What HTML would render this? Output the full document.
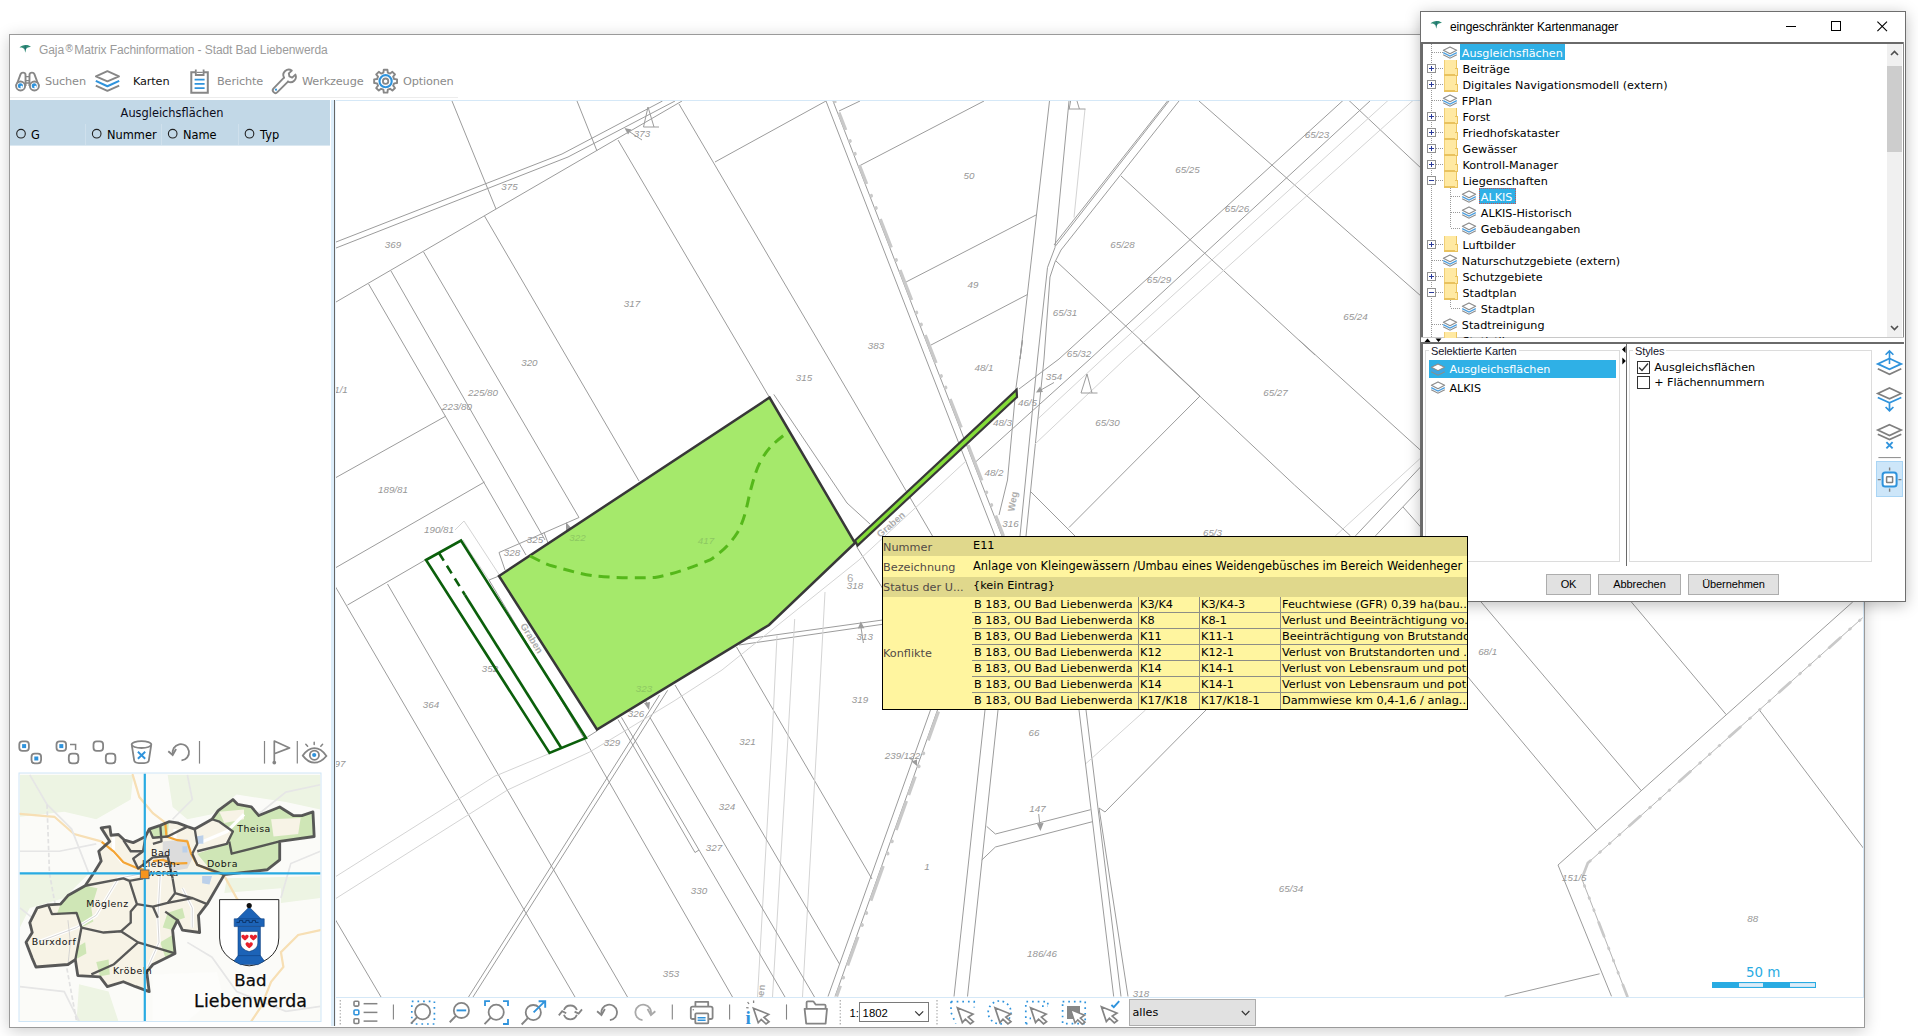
<!DOCTYPE html>
<html lang="de"><head><meta charset="utf-8"><title>Gaja Matrix Fachinformation - Stadt Bad Liebenwerda</title>
<style>
html,body{margin:0;padding:0;background:#fff;}
body{width:1918px;height:1036px;position:relative;overflow:hidden;font-family:"DejaVu Sans","Liberation Sans",sans-serif;font-size:11px;color:#000;}
.abs{position:absolute;}
.seg{font-family:"Liberation Sans",sans-serif;}
#win{left:9px;top:34px;width:1854px;height:992px;border:1px solid #9a9a9a;background:#fff;box-shadow:0 3px 15px rgba(0,0,0,.2);}
#dlg{left:1420px;top:11px;width:484px;height:589px;border:1px solid #6e6e6e;background:#fff;box-shadow:0 3px 14px rgba(0,0,0,.26);}
.t{position:absolute;white-space:nowrap;line-height:16px;height:16px;}
.tb{font-size:11.3px;letter-spacing:-.15px;color:#8a8a8a;}
svg{position:absolute;left:0;top:0;overflow:visible;}
.row{position:absolute;left:0;height:16px;line-height:16px;white-space:nowrap;font-size:11.2px;}
.btn{position:absolute;height:19px;line-height:19px;border:1px solid #adadad;background:#e1e1e1;text-align:center;font-family:'Liberation Sans',sans-serif;font-size:11px;letter-spacing:-.1px;}
.tt{position:absolute;white-space:nowrap;font-size:11.3px;line-height:16px;height:16px;}
</style></head><body>
<div id="win" class="abs"></div>
<!-- main title -->
<div class="t seg" style="left:39px;top:42px;font-size:12px;color:#9b9b9b;letter-spacing:-.09px">Gaja<span style="font-size:10px;position:relative;top:-2px;margin:0 1.5px;color:#8a8a8a">®</span>Matrix Fachinformation - Stadt Bad Liebenwerda</div>
<!-- toolbar labels -->
<div class="t tb" style="left:45px;top:74px">Suchen</div>
<div class="t tb" style="left:133px;top:74px;color:#111">Karten</div>
<div class="t tb" style="left:217px;top:74px">Berichte</div>
<div class="t tb" style="left:302px;top:74px">Werkzeuge</div>
<div class="t tb" style="left:403px;top:74px">Optionen</div>
<div class="abs" style="left:10px;top:97px;width:448px;height:1px;background:#ececec"></div>
<!-- left panel header -->
<div class="abs" style="left:10px;top:100px;width:320px;height:45px;background:#c2d8e7"></div>
<div class="abs" style="left:10px;top:145px;width:320px;height:1px;background:#dbe8f1"></div>
<div class="t" style="left:12px;width:320px;top:105px;text-align:center;font-size:11.4px;color:#0c0c1c">Ausgleichsflächen</div>
<div class="abs" style="left:85px;top:124px;width:1px;height:21px;background:#cfe0ec"></div>
<div class="abs" style="left:161px;top:124px;width:1px;height:21px;background:#cfe0ec"></div>
<div class="abs" style="left:238px;top:124px;width:1px;height:21px;background:#cfe0ec"></div>
<div class="t" style="left:31px;top:127px;font-size:11.4px">G</div>
<div class="t" style="left:107px;top:127px;font-size:11.4px">Nummer</div>
<div class="t" style="left:183px;top:127px;font-size:11.4px">Name</div>
<div class="t" style="left:260px;top:127px;font-size:11.4px">Typ</div>
<!-- splitter -->
<div class="abs" style="left:331px;top:100px;width:3px;height:926px;background:#dcedfa"></div>
<div class="abs" style="left:334px;top:100px;width:1px;height:926px;background:#666"></div>
<div class="abs" style="left:335px;top:100px;width:1px;height:926px;background:#eaf5fd"></div>
<!-- map frame -->
<div class="abs" style="left:336px;top:100px;width:1528px;height:1px;background:#d5e8f7"></div>
<div class="abs" style="left:336px;top:997px;width:1528px;height:1px;background:#d5e8f7"></div>
<div class="abs" style="left:1863px;top:100px;width:1px;height:898px;background:#d5e8f7"></div>
<svg width="1918" height="1036" viewBox="0 0 1918 1036">
<g transform="translate(19.5,44.5)"><path d="M0,3.2 C2,0.2 9,-0.6 11.5,2.6 C9.5,2.2 8,3 6.6,4.4 L5.8,8.2 L4.9,4.6 C3.6,3.2 1.8,2.6 0,3.2 Z" fill="#2e8b74"/><path d="M5.8,1 L5.8,5" stroke="#1f5f7a" stroke-width=".8"/></g>
<g transform="translate(1430.5,20.5)"><path d="M0,3.2 C2,0.2 9,-0.6 11.5,2.6 C9.5,2.2 8,3 6.6,4.4 L5.8,8.2 L4.9,4.6 C3.6,3.2 1.8,2.6 0,3.2 Z" fill="#2e8b74"/><path d="M5.8,1 L5.8,5" stroke="#1f5f7a" stroke-width=".8"/></g>
<g fill="none" stroke="#878787" stroke-width="1.9" stroke-linejoin="round">
<path d="M16.2,86 L20.6,74.2 Q21.2,72.6 23,72.6 Q25.3,72.6 25.5,74.6 L25.6,86"/>
<path d="M38.8,86 L34.4,74.2 Q33.8,72.6 32,72.6 Q29.7,72.6 29.5,74.6 L29.4,86"/>
<circle cx="20.6" cy="86" r="4.5" fill="#fff"/><circle cx="34.4" cy="86" r="4.5" fill="#fff"/>
<path d="M25.6,76.6 H29.4 M25.6,80.6 H29.4 M25.6,83 H29.4" stroke-width="1.4"/>
</g>
<circle cx="20.4" cy="85.8" r="2.5" fill="#2f93dc"/><circle cx="34.2" cy="85.8" r="2.5" fill="#2f93dc"/><circle cx="21.5" cy="86.9" r="1.1" fill="#fff"/><circle cx="35.3" cy="86.9" r="1.1" fill="#fff"/>
<g fill="none" stroke-width="1.9" stroke-linejoin="round"><path d="M95.8,85.6 L107.4,90.9 L119.2,85.6" stroke="#878787"/><path d="M95.8,80.9 L107.4,86.2 L119.2,80.9" stroke="#2f93dc" stroke-width="2.1"/><path d="M107.4,71.2 L119,76.3 L107.4,81.4 L95.9,76.3 Z" stroke="#878787"/></g>
<g fill="none" stroke="#878787" stroke-width="2"><path d="M195.5,72.2 H191.3 V92.7 H207.8 V72.2 H203.8"/><path d="M195.8,69.4 V75 H203.6 V69.4" stroke-width="1.8"/><path d="M196.6,72.4 H202.8" stroke-width="1.2"/></g>
<path d="M194.6,79.6 H204.6 M194.6,83.9 H204.6 M194.6,88.1 H204.6" stroke="#2f93dc" stroke-width="1.9" fill="none"/>
<g fill="none" stroke="#878787" stroke-width="1.9" stroke-linejoin="round" stroke-linecap="round"><path d="M284,77.6 L273.6,88.4 A2.6,2.6 0 0 0 277.4,92.2 L288,81.6"/><path d="M288,81.6 A5.4,5.4 0 0 0 295.4,74.6 L292.2,77.6 L289.4,76.4 L288.8,73.4 L291.8,70.6 A5.4,5.4 0 0 0 284,77.6"/></g>
<circle cx="276" cy="89.7" r="1.1" fill="#2f93dc"/>
<path d="M383.42,72.67 L383.75,69.75 L387.45,69.75 L387.78,72.67 L390.09,73.63 L392.39,71.80 L395.00,74.41 L393.17,76.71 L394.13,79.02 L397.05,79.35 L397.05,83.05 L394.13,83.38 L393.17,85.69 L395.00,87.99 L392.39,90.60 L390.09,88.77 L387.78,89.73 L387.45,92.65 L383.75,92.65 L383.42,89.73 L381.11,88.77 L378.81,90.60 L376.20,87.99 L378.03,85.69 L377.07,83.38 L374.15,83.05 L374.15,79.35 L377.07,79.02 L378.03,76.71 L376.20,74.41 L378.81,71.80 L381.11,73.63 Z" fill="none" stroke="#878787" stroke-width="1.9" stroke-linejoin="round"/>
<circle cx="385.6" cy="81.2" r="6.1" fill="none" stroke="#2f93dc" stroke-width="2.1"/>
<circle cx="385.6" cy="81.2" r="2.7" fill="none" stroke="#878787" stroke-width="1.8"/>
<circle cx="21" cy="133.7" r="4.3" fill="none" stroke="#222" stroke-width="1.1"/>
<circle cx="96.7" cy="133.7" r="4.3" fill="none" stroke="#222" stroke-width="1.1"/>
<circle cx="172.7" cy="133.7" r="4.3" fill="none" stroke="#222" stroke-width="1.1"/>
<circle cx="249.5" cy="133.7" r="4.3" fill="none" stroke="#222" stroke-width="1.1"/>
</svg>
<svg width="1918" height="1036" viewBox="0 0 1918 1036">
<defs><clipPath id="mc"><rect x="336" y="101" width="1527" height="896"/></clipPath></defs>
<g clip-path="url(#mc)">
<g fill="none" stroke-width="1">
<polyline points="336,242 562,154 662.5,101" stroke="#9c9c9c"/>
<polyline points="336,248 568,157 675,101" stroke="#9c9c9c"/>
<polyline points="336,302 682,101" stroke="#9c9c9c"/>
<polyline points="452,101 496,209" stroke="#9c9c9c"/>
<polyline points="577,101 597,151" stroke="#9c9c9c"/>
<polyline points="679,104 853,400 932.5,536" stroke="#9c9c9c"/>
<polyline points="618,140 769.5,397.5" stroke="#9c9c9c"/>
<polyline points="484.5,216 639,481" stroke="#9c9c9c"/>
<polyline points="423.6,252 579,517.5" stroke="#9c9c9c"/>
<polyline points="391,271 545,540" stroke="#9c9c9c"/>
<polyline points="368.6,284 526,555" stroke="#9c9c9c"/>
<polyline points="715,162 826,101" stroke="#9c9c9c"/>
<polyline points="839,111 860,101" stroke="#9c9c9c"/>
<polyline points="861,165 984,101" stroke="#9c9c9c"/>
<polyline points="906,282 1036,215" stroke="#9c9c9c"/>
<polyline points="931,345 1027.5,294.5" stroke="#9c9c9c"/>
<polyline points="826,101 926,359 995,536" stroke="#9c9c9c"/>
<polyline points="833,101 933,359 1002,536" stroke="#9c9c9c"/>
<polyline points="336,477.5 446,416" stroke="#9c9c9c"/>
<polyline points="336,567.5 484.5,482" stroke="#9c9c9c"/>
<polyline points="347.5,605 426,559.5" stroke="#9c9c9c"/>
<polyline points="335,586 575,997" stroke="#9c9c9c"/>
<polyline points="387.5,584 627.5,997" stroke="#9c9c9c"/>
<polyline points="335,919 381,997" stroke="#9c9c9c"/>
<polyline points="505,570 499,552.5 579,517.5" stroke="#9c9c9c"/>
<polyline points="544,532.5 548,543" stroke="#9c9c9c"/>
<polyline points="489,580 499,576" stroke="#9c9c9c"/>
<polyline points="455,530 464,521 470,530 500,576" stroke="#d4d4d4"/>
<polyline points="463,540 470,552 489,580" stroke="#d4d4d4"/>
<polyline points="773.8,394.4 847,503 870,524" stroke="#9c9c9c"/>
<polyline points="856.6,546.7 883,589" stroke="#9c9c9c"/>
<polyline points="739,645 882.5,624.3" stroke="#9c9c9c"/>
<polyline points="746,639 882.5,620" stroke="#9c9c9c"/>
<polyline points="736.5,647 872,879" stroke="#9c9c9c"/>
<polyline points="335,877 495,776 498.8,774.6 549.5,753.5" stroke="#d4d4d4"/>
<polyline points="777,635.6 772,740 757.5,997" stroke="#d4d4d4"/>
<polyline points="794.7,619 787.8,740 772.5,997" stroke="#d4d4d4"/>
<polyline points="825,592 817,740 802.5,997" stroke="#d4d4d4"/>
<polyline points="675,685 708,740 839.5,964" stroke="#9c9c9c"/>
<polyline points="650,717.5 814.5,997" stroke="#9c9c9c"/>
<polyline points="489,580 585,740 732.5,997" stroke="#9c9c9c"/>
<polyline points="587.4,737 597.3,730.8" stroke="#9c9c9c"/>
<polyline points="659.5,695 468.5,997" stroke="#9c9c9c"/>
<polyline points="667.6,690.3 473,997" stroke="#9c9c9c"/>
<polyline points="618,719.5 695,852.5 699,850" stroke="#9c9c9c"/>
<polyline points="621.5,717.4 699,850 785,997" stroke="#9c9c9c"/>
<polyline points="335,899 507.5,790 553,768.8 589.5,752.1 626,730.2 674,701 722,670 859,560 966.5,460.5" stroke="#d4d4d4"/>
<polyline points="1038.4,418.4 1102.5,359" stroke="#d4d4d4"/>
<polyline points="1049.5,101 1020,359 1022.5,340 1016,387.5 1007.5,480 999,515" stroke="#9c9c9c"/>
<polyline points="1069,101 1055,247.5 1047.5,267.5 1037.5,359 1020,536" stroke="#9c9c9c"/>
<polyline points="1061,250 1055,262 1050,277 1044,359 1026,536" stroke="#9c9c9c"/>
<polyline points="1167.5,101 1054,245" stroke="#9c9c9c"/>
<polyline points="1169,101 1055.5,246" stroke="#9c9c9c"/>
<polyline points="1179,101 1061,250" stroke="#9c9c9c"/>
<polyline points="1085,109 1074,217.5" stroke="#d4d4d4"/>
<polyline points="1121,176 1315,355" stroke="#9c9c9c"/>
<polyline points="1199,101 1420.7,295.8" stroke="#9c9c9c"/>
<polyline points="1349,100.5 1420.7,167.8" stroke="#9c9c9c"/>
<polyline points="1056,261 1161,359 1200,396" stroke="#9c9c9c"/>
<polyline points="1059,359 1343,100.5" stroke="#9c9c9c"/>
<polyline points="1090,359 1370.5,100.5" stroke="#9c9c9c"/>
<polyline points="1102.5,359 1388,100.5" stroke="#d4d4d4"/>
<polyline points="1125,359 1413,100.5" stroke="#d4d4d4"/>
<polyline points="1019,389 1059,359" stroke="#9c9c9c"/>
<polyline points="975,462.5 1090,359" stroke="#9c9c9c"/>
<polyline points="1035,444 1125,359" stroke="#d4d4d4"/>
<polyline points="1140,340 1294.5,485 1350.4,535.8" stroke="#9c9c9c"/>
<polyline points="1299,340 1420.7,450.4" stroke="#9c9c9c"/>
<polyline points="1069,527.5 1200,396" stroke="#9c9c9c"/>
<polyline points="1030,491 1075,536" stroke="#9c9c9c"/>
<polyline points="1355.5,535.8 1420.7,466.8" stroke="#9c9c9c"/>
<polyline points="1375.5,535.8 1420.7,488" stroke="#9c9c9c"/>
<polyline points="1335.4,535.8 1420.7,458" stroke="#d4d4d4"/>
<polyline points="1403,507 1420.7,527" stroke="#9c9c9c"/>
<polyline points="930.5,710 828,996.5" stroke="#9c9c9c"/>
<polyline points="937.5,710 835,996.5" stroke="#9c9c9c"/>
<polyline points="985,710 954,996.5" stroke="#9c9c9c"/>
<polyline points="998,710 967.5,996.5" stroke="#9c9c9c"/>
<polyline points="1079,710 1113.7,996.5" stroke="#9c9c9c"/>
<polyline points="1086,710 1121,996.5" stroke="#9c9c9c"/>
<polyline points="1099,808 1128,996.5" stroke="#9c9c9c"/>
<polyline points="1206,710 1105,812 1099,808" stroke="#9c9c9c"/>
<polyline points="1145.5,710 1086,763.5" stroke="#d4d4d4"/>
<polyline points="986.7,826.4 995.4,834 1090.6,809.7" stroke="#9c9c9c"/>
<polyline points="981.8,860 995.4,847 1092,821.8" stroke="#9c9c9c"/>
<polyline points="1852.8,601.9 1558,865 1611.5,996.3" stroke="#9c9c9c"/>
<polyline points="1862.7,617.7 1587.8,863 1581.8,878.8 1627.3,996.3" stroke="#b4b4b4"/>
<polyline points="1481,601.9 1641.2,790.6" stroke="#9c9c9c"/>
<polyline points="1467.9,677 1596.5,830.5" stroke="#9c9c9c"/>
<polyline points="1631.3,601.9 1726.2,714.6" stroke="#9c9c9c"/>
<polyline points="1759.9,710.7 1864,849" stroke="#9c9c9c"/>
<polyline points="1504.7,996.3 1599.6,973.8" stroke="#9c9c9c"/>
</g>
<g fill="none" stroke="#c9c9c9" stroke-width="3.3" stroke-linecap="butt">
<polyline points="834.5,101 835.275,103"/>
<polyline points="838.957,112.5 845.74,130"/>
<polyline points="859.306,165 866.671,184"/>
<polyline points="880.236,219 891.283,247.5"/>
<polyline points="900.004,270 911.632,300"/>
<polyline points="925.198,335 934.5,359 936.059,363"/>
<polyline points="950.093,399 961.203,427.5"/>
<polyline points="968.025,445 981.864,480.5"/>
<polyline points="995.586,515.7 1003.5,536"/>
<path d="M850.004,141 l0.01,0.02" stroke-width="3.6" stroke-linecap="round"/>
<path d="M854.946,153.75 l0.01,0.02" stroke-width="3.6" stroke-linecap="round"/>
<path d="M871.225,195.75 l0.01,0.02" stroke-width="3.6" stroke-linecap="round"/>
<path d="M875.973,208 l0.01,0.02" stroke-width="3.6" stroke-linecap="round"/>
<path d="M896.128,260 l0.01,0.02" stroke-width="3.6" stroke-linecap="round"/>
<path d="M916.477,312.5 l0.01,0.02" stroke-width="3.6" stroke-linecap="round"/>
<path d="M921.128,324.5 l0.01,0.02" stroke-width="3.6" stroke-linecap="round"/>
<path d="M941.127,376 l0.01,0.02" stroke-width="3.6" stroke-linecap="round"/>
<path d="M945.61,387.5 l0.01,0.02" stroke-width="3.6" stroke-linecap="round"/>
<path d="M986.464,492.3 l0.01,0.02" stroke-width="3.6" stroke-linecap="round"/>
<path d="M991.415,505 l0.01,0.02" stroke-width="3.6" stroke-linecap="round"/>
<polyline points="938.463,711.5 928.124,740.4"/>
<polyline points="915.209,776.5 908.59,795"/>
<polyline points="906.443,801 896.068,830"/>
<polyline points="883.188,866 870.81,900.6"/>
<polyline points="857.93,936.6 847.591,965.5"/>
<polyline points="840.364,985.7 836.5,996.5"/>
<path d="M923.473,753.4 l0.01,0.02" stroke-width="3.6" stroke-linecap="round"/>
<path d="M918.822,766.4 l0.01,0.02" stroke-width="3.6" stroke-linecap="round"/>
<path d="M891.99,841.4 l0.01,0.02" stroke-width="3.6" stroke-linecap="round"/>
<path d="M887.661,853.5 l0.01,0.02" stroke-width="3.6" stroke-linecap="round"/>
<path d="M866.373,913 l0.01,0.02" stroke-width="3.6" stroke-linecap="round"/>
<path d="M862.08,925 l0.01,0.02" stroke-width="3.6" stroke-linecap="round"/>
<path d="M843.262,977.6 l0.01,0.02" stroke-width="3.6" stroke-linecap="round"/>
</g>
<g fill="none" stroke="#c9c9c9" stroke-linecap="round">
<polyline points="1862.7,617.7 1587.8,863 1581.8,878.8 1627.3,996.3" stroke-width="2.7" stroke-dasharray="15 12.5 1 12 1 12 1 12.5" stroke-dashoffset="-30"/>
</g>
<g fill="none" stroke="#9c9c9c" stroke-width="1"><path d="M648,107 L643.5,127 L659,127 M648,107 L654,127"/><path d="M1087,374 L1081,393 L1097.5,393 M1087,374 L1092,393"/><path d="M1068,109 H1085.5 M1069.2,109 L1070.6,101 M1077,101 L1079.4,109"/><path d="M627,130 L642,140"/><path d="M1054,382.5 L1040,390.5"/><path d="M1038.7,814 L1040,826"/><path d="M909,757.5 L915,763"/><path d="M861.1,628 L863.4,643"/><path d="M644,697 L648,706"/></g>
<g fill="#9c9c9c"><path d="M624.5,128 L631.5,129.5 L628,134.5 Z"/><path d="M1036,392.5 L1040,386.5 L1043,392 Z"/><path d="M566,522 L572,529 L566,531 Z"/><path d="M1036.8,823.5 L1043.6,823 L1040.4,831 Z"/><path d="M911.5,761.5 L917,759.5 L917,766 Z"/><path d="M857.8,628.6 L860.8,621.6 L864.4,628.2 Z"/><path d="M644,703 L650,702 L649,710 Z"/></g>
<g font-family="Liberation Sans, sans-serif" font-style="italic" font-size="9.8" fill="#979797" text-anchor="middle">
<text x="642" y="137.4">373</text>
<text x="509.5" y="190.4">375</text>
<text x="393" y="248.4">369</text>
<text x="632" y="307.4">317</text>
<text x="529.4" y="366.4">320</text>
<text x="876" y="349.4">383</text>
<text x="804" y="381.4">315</text>
<text x="483" y="395.9">225/80</text>
<text x="341" y="393.4">1/1</text>
<text x="457" y="410.4">223/80</text>
<text x="393" y="492.9">189/81</text>
<text x="439" y="533.4">190/81</text>
<text x="535" y="543.4">325</text>
<text x="512" y="556.4">328</text>
<text x="577.5" y="540.4">322</text>
<text x="706" y="543.4">417</text>
<text x="490" y="672.4">352</text>
<text x="431" y="707.9">364</text>
<text x="644" y="691.4">323</text>
<text x="636" y="717.4">326</text>
<text x="612" y="746.4">329</text>
<text x="747.5" y="745.4">321</text>
<text x="340" y="767.4">97</text>
<text x="727" y="810.4">324</text>
<text x="714" y="851.4">327</text>
<text x="699" y="894.4">330</text>
<text x="671" y="977.4">353</text>
<text x="969" y="179.4">50</text>
<text x="973" y="287.9">49</text>
<text x="1187.5" y="173.4">65/25</text>
<text x="1237" y="212.4">65/26</text>
<text x="1122.5" y="248.4">65/28</text>
<text x="1159" y="283.4">65/29</text>
<text x="1065" y="316.4">65/31</text>
<text x="1079" y="357.4">65/32</text>
<text x="984" y="371.4">48/1</text>
<text x="1054" y="380.4">354</text>
<text x="1027.5" y="406.4">46/5</text>
<text x="1002.5" y="425.9">48/3</text>
<text x="1107.5" y="426.4">65/30</text>
<text x="1275.5" y="396.4">65/27</text>
<text x="994" y="476.4">48/2</text>
<text x="1010.5" y="527.4">316</text>
<text x="1212.5" y="535.9">65/3</text>
<text x="855" y="588.9">318</text>
<text x="864.8" y="640.4">313</text>
<text x="860" y="703.4">319</text>
<text x="1034" y="735.9">66</text>
<text x="902.5" y="758.9">239/122</text>
<text x="1037.5" y="811.9">147</text>
<text x="927" y="870.4">1</text>
<text x="1042" y="957.4">186/46</text>
<text x="1141" y="997.4">318</text>
<text x="1291" y="892.4">65/34</text>
<text x="1317" y="137.8">65/23</text>
<text x="1355.5" y="319.8">65/24</text>
<text x="1487.7" y="654.7">68/1</text>
<text x="1574.3" y="881.4">151/5</text>
<text x="1752.7" y="921.8">88</text>
<text x="850.3" y="582" font-style="normal" font-size="11.5" fill="#aaa">6</text>
</g>
<g font-family="Liberation Sans, sans-serif" font-weight="bold" font-size="9.6" fill="#adadad" text-anchor="middle">
<text transform="translate(529,640) rotate(58)">Graben</text>
<text transform="translate(893,527) rotate(-41)">Graben</text>
<text transform="translate(1016,502) rotate(-80)">Weg</text>
<text transform="translate(765,985) rotate(-84)" text-anchor="end">Graben</text>
</g>
<g fill="none" stroke="#0b5f0b" stroke-width="2.6" stroke-linejoin="miter"><polygon points="426,560 461,540.5 586,738 549.5,753"/><path d="M465,595 L561,747.5"/><path d="M439,553 L465,595" stroke-dasharray="9 6"/></g>
<polygon points="769.5,397.5 855,543 769,625 597,729.5 499,576" fill="#a5e96b" stroke="#383838" stroke-width="2.5" stroke-linejoin="miter"/>
<path d="M530,556 C540,561 545,564 552.5,566 C565,569.5 580,574 595,576 C615,578 640,578 655,577.5 C675,574 695,566 710,560 C722,552 731,543 737.5,532.5 C745,519 747,505 750,492.5 C753,481 756,470 760,462.5 C764,455 768,449 772.5,445 C777,440.5 782,436.5 787.5,432.5" fill="none" stroke="#55b81a" stroke-width="3" stroke-dasharray="11 7"/>
<polygon points="855,540.5 1016.6,389.6 1017,397 857.5,545.6" fill="#84dc38" stroke="#383838" stroke-width="2.2" stroke-linejoin="miter"/>
<g font-family="Liberation Sans, sans-serif" font-style="italic" font-size="9.8" fill="#8dc862" text-anchor="middle"><text x="577.5" y="541">322</text><text x="706" y="544">417</text><text x="644" y="692">323</text></g>
<g><rect x="1712" y="982" width="104" height="6" fill="#29abe2"/><rect x="1739" y="983.1" width="24" height="3.8" fill="#dcecf8"/><rect x="1790" y="983.1" width="25" height="3.8" fill="#dcecf8"/><text x="1763.2" y="977" font-family="DejaVu Sans, sans-serif" font-size="13.4" fill="#29abe2" text-anchor="middle">50 m</text></g>
</g></svg>
<div id="dlg" class="abs">
<div class="t seg" style="left:29px;top:7px;font-size:12px;letter-spacing:-.11px">eingeschränkter Kartenmanager</div>
<svg width="486" height="40" viewBox="0 0 486 40"><g stroke="#000" stroke-width="1" fill="none"><path d="M365,14.5 H375"/><rect x="410.5" y="9.5" width="9" height="9"/><path d="M456.4,9.6 L466,19.2 M466,9.6 L456.4,19.2" stroke-width="1.1"/></g></svg>
<div class="abs" style="left:0;top:30px;width:483px;height:2px;background:#6a6a6a"></div>
<div class="abs" style="left:0;top:30px;width:2px;height:296px;background:#6a6a6a"></div>
<div class="abs" style="left:482px;top:30px;width:1px;height:296px;background:#8a8a8a"></div>
<div class="abs" style="left:0;top:325px;width:483px;height:1px;background:#c8c8c8"></div>
<div class="abs" style="left:2px;top:32px;width:465px;height:294px;overflow:hidden">
<div class="abs" style="left:8px;top:0;width:1px;height:300px;background-image:linear-gradient(to bottom,#9a9a9a 50%,transparent 50%);background-size:1px 2px;"></div>
<div class="abs" style="left:27px;top:144px;width:1px;height:40px;background-image:linear-gradient(to bottom,#9a9a9a 50%,transparent 50%);background-size:1px 2px;"></div>
<div class="abs" style="left:27px;top:248px;width:1px;height:16px;background-image:linear-gradient(to bottom,#9a9a9a 50%,transparent 50%);background-size:1px 2px;"></div>
<div class="abs" style="left:9px;top:8px;width:11px;height:1px;background-image:linear-gradient(to right,#9a9a9a 50%,transparent 50%);background-size:2px 1px;"></div>
<svg width="16" height="14" viewBox="0 0 16 14" style="left:19px;top:1.8px"><path d="M1.2,8.8 L8,12.2 L14.8,8.8" fill="none" stroke="#8c8c8c" stroke-width="1.15"/><path d="M1.2,6.6 L8,10 L14.8,6.6" fill="none" stroke="#4a9fe0" stroke-width="1.25"/><path d="M8,0.9 L14.6,4.3 L8,7.7 L1.4,4.3 Z" fill="#fff" stroke="#8c8c8c" stroke-width="1.15" stroke-linejoin="round"/></svg>
<div class="abs" style="left:36.8px;top:0px;width:105px;height:16px;background:#2fb0e6;"></div>
<div class="row" style="left:38.8px;top:2px;color:#fff;">Ausgleichsflächen</div>
<div class="abs" style="left:9px;top:24px;width:11px;height:1px;background-image:linear-gradient(to right,#9a9a9a 50%,transparent 50%);background-size:2px 1px;"></div>
<div class="abs" style="left:21px;top:16px;width:11px;height:16px;background:#ffe9a2;border-left:1px solid #f0cf78;border-right:1px solid #ebc560"></div>
<div class="abs" style="left:21px;top:30px;width:13px;height:1.5px;background:#e9c25e"></div>
<div class="abs" style="left:32px;top:24px;width:2px;height:6px;border:1px solid #e9c25e;border-left:none;background:#ffe9a2"></div>
<div class="abs" style="left:4px;top:20px;width:7px;height:7px;border:1px solid #919191;background:#fff"></div>
<div class="abs" style="left:6px;top:24px;width:5px;height:1px;background:#2a3a9a"></div>
<div class="abs" style="left:8px;top:22px;width:1px;height:5px;background:#2a3a9a"></div>
<div class="row" style="left:39.5px;top:18px;">Beiträge</div>
<div class="abs" style="left:9px;top:40px;width:11px;height:1px;background-image:linear-gradient(to right,#9a9a9a 50%,transparent 50%);background-size:2px 1px;"></div>
<div class="abs" style="left:21px;top:32px;width:11px;height:16px;background:#ffe9a2;border-left:1px solid #f0cf78;border-right:1px solid #ebc560"></div>
<div class="abs" style="left:21px;top:46px;width:13px;height:1.5px;background:#e9c25e"></div>
<div class="abs" style="left:32px;top:40px;width:2px;height:6px;border:1px solid #e9c25e;border-left:none;background:#ffe9a2"></div>
<div class="abs" style="left:4px;top:36px;width:7px;height:7px;border:1px solid #919191;background:#fff"></div>
<div class="abs" style="left:6px;top:40px;width:5px;height:1px;background:#2a3a9a"></div>
<div class="abs" style="left:8px;top:38px;width:1px;height:5px;background:#2a3a9a"></div>
<div class="row" style="left:39.5px;top:34px;">Digitales Navigationsmodell (extern)</div>
<div class="abs" style="left:9px;top:56px;width:11px;height:1px;background-image:linear-gradient(to right,#9a9a9a 50%,transparent 50%);background-size:2px 1px;"></div>
<svg width="16" height="14" viewBox="0 0 16 14" style="left:19px;top:49.8px"><path d="M1.2,8.8 L8,12.2 L14.8,8.8" fill="none" stroke="#8c8c8c" stroke-width="1.15"/><path d="M1.2,6.6 L8,10 L14.8,6.6" fill="none" stroke="#4a9fe0" stroke-width="1.25"/><path d="M8,0.9 L14.6,4.3 L8,7.7 L1.4,4.3 Z" fill="#fff" stroke="#8c8c8c" stroke-width="1.15" stroke-linejoin="round"/></svg>
<div class="row" style="left:38.8px;top:50px;">FPlan</div>
<div class="abs" style="left:9px;top:72px;width:11px;height:1px;background-image:linear-gradient(to right,#9a9a9a 50%,transparent 50%);background-size:2px 1px;"></div>
<div class="abs" style="left:21px;top:64px;width:11px;height:16px;background:#ffe9a2;border-left:1px solid #f0cf78;border-right:1px solid #ebc560"></div>
<div class="abs" style="left:21px;top:78px;width:13px;height:1.5px;background:#e9c25e"></div>
<div class="abs" style="left:32px;top:72px;width:2px;height:6px;border:1px solid #e9c25e;border-left:none;background:#ffe9a2"></div>
<div class="abs" style="left:4px;top:68px;width:7px;height:7px;border:1px solid #919191;background:#fff"></div>
<div class="abs" style="left:6px;top:72px;width:5px;height:1px;background:#2a3a9a"></div>
<div class="abs" style="left:8px;top:70px;width:1px;height:5px;background:#2a3a9a"></div>
<div class="row" style="left:39.5px;top:66px;">Forst</div>
<div class="abs" style="left:9px;top:88px;width:11px;height:1px;background-image:linear-gradient(to right,#9a9a9a 50%,transparent 50%);background-size:2px 1px;"></div>
<div class="abs" style="left:21px;top:80px;width:11px;height:16px;background:#ffe9a2;border-left:1px solid #f0cf78;border-right:1px solid #ebc560"></div>
<div class="abs" style="left:21px;top:94px;width:13px;height:1.5px;background:#e9c25e"></div>
<div class="abs" style="left:32px;top:88px;width:2px;height:6px;border:1px solid #e9c25e;border-left:none;background:#ffe9a2"></div>
<div class="abs" style="left:4px;top:84px;width:7px;height:7px;border:1px solid #919191;background:#fff"></div>
<div class="abs" style="left:6px;top:88px;width:5px;height:1px;background:#2a3a9a"></div>
<div class="abs" style="left:8px;top:86px;width:1px;height:5px;background:#2a3a9a"></div>
<div class="row" style="left:39.5px;top:82px;">Friedhofskataster</div>
<div class="abs" style="left:9px;top:104px;width:11px;height:1px;background-image:linear-gradient(to right,#9a9a9a 50%,transparent 50%);background-size:2px 1px;"></div>
<div class="abs" style="left:21px;top:96px;width:11px;height:16px;background:#ffe9a2;border-left:1px solid #f0cf78;border-right:1px solid #ebc560"></div>
<div class="abs" style="left:21px;top:110px;width:13px;height:1.5px;background:#e9c25e"></div>
<div class="abs" style="left:32px;top:104px;width:2px;height:6px;border:1px solid #e9c25e;border-left:none;background:#ffe9a2"></div>
<div class="abs" style="left:4px;top:100px;width:7px;height:7px;border:1px solid #919191;background:#fff"></div>
<div class="abs" style="left:6px;top:104px;width:5px;height:1px;background:#2a3a9a"></div>
<div class="abs" style="left:8px;top:102px;width:1px;height:5px;background:#2a3a9a"></div>
<div class="row" style="left:39.5px;top:98px;">Gewässer</div>
<div class="abs" style="left:9px;top:120px;width:11px;height:1px;background-image:linear-gradient(to right,#9a9a9a 50%,transparent 50%);background-size:2px 1px;"></div>
<div class="abs" style="left:21px;top:112px;width:11px;height:16px;background:#ffe9a2;border-left:1px solid #f0cf78;border-right:1px solid #ebc560"></div>
<div class="abs" style="left:21px;top:126px;width:13px;height:1.5px;background:#e9c25e"></div>
<div class="abs" style="left:32px;top:120px;width:2px;height:6px;border:1px solid #e9c25e;border-left:none;background:#ffe9a2"></div>
<div class="abs" style="left:4px;top:116px;width:7px;height:7px;border:1px solid #919191;background:#fff"></div>
<div class="abs" style="left:6px;top:120px;width:5px;height:1px;background:#2a3a9a"></div>
<div class="abs" style="left:8px;top:118px;width:1px;height:5px;background:#2a3a9a"></div>
<div class="row" style="left:39.5px;top:114px;">Kontroll-Manager</div>
<div class="abs" style="left:9px;top:136px;width:11px;height:1px;background-image:linear-gradient(to right,#9a9a9a 50%,transparent 50%);background-size:2px 1px;"></div>
<div class="abs" style="left:21px;top:128px;width:11px;height:16px;background:#ffe9a2;border-left:1px solid #f0cf78;border-right:1px solid #ebc560"></div>
<div class="abs" style="left:21px;top:142px;width:13px;height:1.5px;background:#e9c25e"></div>
<div class="abs" style="left:32px;top:136px;width:2px;height:6px;border:1px solid #e9c25e;border-left:none;background:#ffe9a2"></div>
<div class="abs" style="left:4px;top:132px;width:7px;height:7px;border:1px solid #919191;background:#fff"></div>
<div class="abs" style="left:6px;top:136px;width:5px;height:1px;background:#2a3a9a"></div>
<div class="row" style="left:39.5px;top:130px;">Liegenschaften</div>
<div class="abs" style="left:28px;top:152px;width:10px;height:1px;background-image:linear-gradient(to right,#9a9a9a 50%,transparent 50%);background-size:2px 1px;"></div>
<svg width="16" height="14" viewBox="0 0 16 14" style="left:37.5px;top:145.8px"><path d="M1.2,8.8 L8,12.2 L14.8,8.8" fill="none" stroke="#8c8c8c" stroke-width="1.15"/><path d="M1.2,6.6 L8,10 L14.8,6.6" fill="none" stroke="#4a9fe0" stroke-width="1.25"/><path d="M8,0.9 L14.6,4.3 L8,7.7 L1.4,4.3 Z" fill="#fff" stroke="#8c8c8c" stroke-width="1.15" stroke-linejoin="round"/></svg>
<div class="abs" style="left:55.8px;top:144px;width:37px;height:16px;background:#2fb0e6;outline:1px dotted #c55;outline-offset:-1px;"></div>
<div class="row" style="left:57.8px;top:146px;color:#fff;">ALKIS</div>
<div class="abs" style="left:28px;top:168px;width:10px;height:1px;background-image:linear-gradient(to right,#9a9a9a 50%,transparent 50%);background-size:2px 1px;"></div>
<svg width="16" height="14" viewBox="0 0 16 14" style="left:37.5px;top:161.8px"><path d="M1.2,8.8 L8,12.2 L14.8,8.8" fill="none" stroke="#8c8c8c" stroke-width="1.15"/><path d="M1.2,6.6 L8,10 L14.8,6.6" fill="none" stroke="#4a9fe0" stroke-width="1.25"/><path d="M8,0.9 L14.6,4.3 L8,7.7 L1.4,4.3 Z" fill="#fff" stroke="#8c8c8c" stroke-width="1.15" stroke-linejoin="round"/></svg>
<div class="row" style="left:57.8px;top:162px;">ALKIS-Historisch</div>
<div class="abs" style="left:28px;top:184px;width:10px;height:1px;background-image:linear-gradient(to right,#9a9a9a 50%,transparent 50%);background-size:2px 1px;"></div>
<svg width="16" height="14" viewBox="0 0 16 14" style="left:37.5px;top:177.8px"><path d="M1.2,8.8 L8,12.2 L14.8,8.8" fill="none" stroke="#8c8c8c" stroke-width="1.15"/><path d="M1.2,6.6 L8,10 L14.8,6.6" fill="none" stroke="#4a9fe0" stroke-width="1.25"/><path d="M8,0.9 L14.6,4.3 L8,7.7 L1.4,4.3 Z" fill="#fff" stroke="#8c8c8c" stroke-width="1.15" stroke-linejoin="round"/></svg>
<div class="row" style="left:57.8px;top:178px;">Gebäudeangaben</div>
<div class="abs" style="left:9px;top:200px;width:11px;height:1px;background-image:linear-gradient(to right,#9a9a9a 50%,transparent 50%);background-size:2px 1px;"></div>
<div class="abs" style="left:21px;top:192px;width:11px;height:16px;background:#ffe9a2;border-left:1px solid #f0cf78;border-right:1px solid #ebc560"></div>
<div class="abs" style="left:21px;top:206px;width:13px;height:1.5px;background:#e9c25e"></div>
<div class="abs" style="left:32px;top:200px;width:2px;height:6px;border:1px solid #e9c25e;border-left:none;background:#ffe9a2"></div>
<div class="abs" style="left:4px;top:196px;width:7px;height:7px;border:1px solid #919191;background:#fff"></div>
<div class="abs" style="left:6px;top:200px;width:5px;height:1px;background:#2a3a9a"></div>
<div class="abs" style="left:8px;top:198px;width:1px;height:5px;background:#2a3a9a"></div>
<div class="row" style="left:39.5px;top:194px;">Luftbilder</div>
<div class="abs" style="left:9px;top:216px;width:11px;height:1px;background-image:linear-gradient(to right,#9a9a9a 50%,transparent 50%);background-size:2px 1px;"></div>
<svg width="16" height="14" viewBox="0 0 16 14" style="left:19px;top:209.8px"><path d="M1.2,8.8 L8,12.2 L14.8,8.8" fill="none" stroke="#8c8c8c" stroke-width="1.15"/><path d="M1.2,6.6 L8,10 L14.8,6.6" fill="none" stroke="#4a9fe0" stroke-width="1.25"/><path d="M8,0.9 L14.6,4.3 L8,7.7 L1.4,4.3 Z" fill="#fff" stroke="#8c8c8c" stroke-width="1.15" stroke-linejoin="round"/></svg>
<div class="row" style="left:38.8px;top:210px;">Naturschutzgebiete (extern)</div>
<div class="abs" style="left:9px;top:232px;width:11px;height:1px;background-image:linear-gradient(to right,#9a9a9a 50%,transparent 50%);background-size:2px 1px;"></div>
<div class="abs" style="left:21px;top:224px;width:11px;height:16px;background:#ffe9a2;border-left:1px solid #f0cf78;border-right:1px solid #ebc560"></div>
<div class="abs" style="left:21px;top:238px;width:13px;height:1.5px;background:#e9c25e"></div>
<div class="abs" style="left:32px;top:232px;width:2px;height:6px;border:1px solid #e9c25e;border-left:none;background:#ffe9a2"></div>
<div class="abs" style="left:4px;top:228px;width:7px;height:7px;border:1px solid #919191;background:#fff"></div>
<div class="abs" style="left:6px;top:232px;width:5px;height:1px;background:#2a3a9a"></div>
<div class="abs" style="left:8px;top:230px;width:1px;height:5px;background:#2a3a9a"></div>
<div class="row" style="left:39.5px;top:226px;">Schutzgebiete</div>
<div class="abs" style="left:9px;top:248px;width:11px;height:1px;background-image:linear-gradient(to right,#9a9a9a 50%,transparent 50%);background-size:2px 1px;"></div>
<div class="abs" style="left:21px;top:240px;width:11px;height:16px;background:#ffe9a2;border-left:1px solid #f0cf78;border-right:1px solid #ebc560"></div>
<div class="abs" style="left:21px;top:254px;width:13px;height:1.5px;background:#e9c25e"></div>
<div class="abs" style="left:32px;top:248px;width:2px;height:6px;border:1px solid #e9c25e;border-left:none;background:#ffe9a2"></div>
<div class="abs" style="left:4px;top:244px;width:7px;height:7px;border:1px solid #919191;background:#fff"></div>
<div class="abs" style="left:6px;top:248px;width:5px;height:1px;background:#2a3a9a"></div>
<div class="row" style="left:39.5px;top:242px;">Stadtplan</div>
<div class="abs" style="left:28px;top:264px;width:10px;height:1px;background-image:linear-gradient(to right,#9a9a9a 50%,transparent 50%);background-size:2px 1px;"></div>
<svg width="16" height="14" viewBox="0 0 16 14" style="left:37.5px;top:257.8px"><path d="M1.2,8.8 L8,12.2 L14.8,8.8" fill="none" stroke="#8c8c8c" stroke-width="1.15"/><path d="M1.2,6.6 L8,10 L14.8,6.6" fill="none" stroke="#4a9fe0" stroke-width="1.25"/><path d="M8,0.9 L14.6,4.3 L8,7.7 L1.4,4.3 Z" fill="#fff" stroke="#8c8c8c" stroke-width="1.15" stroke-linejoin="round"/></svg>
<div class="row" style="left:57.8px;top:258px;">Stadtplan</div>
<div class="abs" style="left:9px;top:280px;width:11px;height:1px;background-image:linear-gradient(to right,#9a9a9a 50%,transparent 50%);background-size:2px 1px;"></div>
<svg width="16" height="14" viewBox="0 0 16 14" style="left:19px;top:273.8px"><path d="M1.2,8.8 L8,12.2 L14.8,8.8" fill="none" stroke="#8c8c8c" stroke-width="1.15"/><path d="M1.2,6.6 L8,10 L14.8,6.6" fill="none" stroke="#4a9fe0" stroke-width="1.25"/><path d="M8,0.9 L14.6,4.3 L8,7.7 L1.4,4.3 Z" fill="#fff" stroke="#8c8c8c" stroke-width="1.15" stroke-linejoin="round"/></svg>
<div class="row" style="left:38.8px;top:274px;">Stadtreinigung</div>
<div class="abs" style="left:9px;top:296px;width:11px;height:1px;background-image:linear-gradient(to right,#9a9a9a 50%,transparent 50%);background-size:2px 1px;"></div>
<div class="abs" style="left:21px;top:288px;width:11px;height:16px;background:#ffe9a2;border-left:1px solid #f0cf78;border-right:1px solid #ebc560"></div>
<div class="abs" style="left:21px;top:302px;width:13px;height:1.5px;background:#e9c25e"></div>
<div class="abs" style="left:32px;top:296px;width:2px;height:6px;border:1px solid #e9c25e;border-left:none;background:#ffe9a2"></div>
<div class="row" style="left:39.5px;top:290px;">Statistik</div>
</div>
<div class="abs" style="left:466px;top:32px;width:15px;height:293px;background:#f0f0f0"></div>
<div class="abs" style="left:466px;top:54px;width:15px;height:86px;background:#cdcdcd"></div>
<svg width="486" height="600" viewBox="0 0 486 600"><g fill="none" stroke="#505050" stroke-width="1.6"><path d="M470,43 l3.5,-3.5 l3.5,3.5"/><path d="M470,314 l3.5,3.5 l3.5,-3.5"/></g></svg>
<div class="abs" style="left:0;top:330px;width:483px;height:2px;background:#6a6a6a"></div>
<div class="abs" style="left:0;top:330px;width:2px;height:224px;background:#6a6a6a"></div>
<svg width="486" height="600" viewBox="0 0 486 600"><g fill="#000"><path d="M3.5,330 l3,-3.5 l3,3.5z"/><path d="M14.5,326.5 l3,3.5 l3,-3.5z"/></g></svg>
<div class="abs" style="left:205px;top:332px;width:1px;height:222px;background:#6a6a6a"></div>
<div class="abs" style="left:4px;top:338px;width:193px;height:210px;border:1px solid #dcdcdc;"></div>
<div class="abs" style="left:208px;top:338px;width:241px;height:210px;border:1px solid #dcdcdc;"></div>
<div class="t" style="left:8px;top:333px;height:12px;line-height:12px;background:#fff;padding:0 2px;font-family:Liberation Sans,sans-serif;font-size:11px;letter-spacing:-.1px;color:#14142a">Selektierte Karten</div>
<div class="t" style="left:212px;top:333px;height:12px;line-height:12px;background:#fff;padding:0 2px;font-family:Liberation Sans,sans-serif;font-size:11px;letter-spacing:-.1px;color:#14142a">Styles</div>
<svg width="486" height="600" viewBox="0 0 486 600"><g fill="#000"><path d="M201,337.5 l3.5,-3.5 l0,7z"/><path d="M204.8,349 l-3.5,-3.5 l0,7z"/></g></svg>
<div class="abs" style="left:8px;top:348px;width:187px;height:18px;background:#2fb0e6"></div>
<svg width="16" height="14" viewBox="0 0 16 14" style="left:9px;top:350.5px"><path d="M1.2,8.8 L8,12.2 L14.8,8.8" fill="none" stroke="#8c8c8c" stroke-width="1.15"/><path d="M1.2,6.6 L8,10 L14.8,6.6" fill="none" stroke="#4a9fe0" stroke-width="1.25"/><path d="M8,0.9 L14.6,4.3 L8,7.7 L1.4,4.3 Z" fill="#fff" stroke="#8c8c8c" stroke-width="1.15" stroke-linejoin="round"/></svg>
<svg width="16" height="14" viewBox="0 0 16 14" style="left:9px;top:369px"><path d="M1.2,8.8 L8,12.2 L14.8,8.8" fill="none" stroke="#8c8c8c" stroke-width="1.15"/><path d="M1.2,6.6 L8,10 L14.8,6.6" fill="none" stroke="#4a9fe0" stroke-width="1.25"/><path d="M8,0.9 L14.6,4.3 L8,7.7 L1.4,4.3 Z" fill="#fff" stroke="#8c8c8c" stroke-width="1.15" stroke-linejoin="round"/></svg>
<div class="row" style="left:28.4px;top:350.3px;color:#fff;font-size:11.2px">Ausgleichsflächen</div>
<div class="row" style="left:28.4px;top:368.5px;font-size:11.2px">ALKIS</div>
<div class="abs" style="left:216px;top:349px;width:11px;height:11px;border:1px solid #333;background:#fff"></div>
<div class="abs" style="left:216px;top:364px;width:11px;height:11px;border:1px solid #333;background:#fff"></div>
<svg width="486" height="600" viewBox="0 0 486 600"><path d="M218,355.5 l3,3 l6,-7" fill="none" stroke="#333" stroke-width="1.3"/></svg>
<div class="row" style="left:233.2px;top:348px;font-size:11.2px">Ausgleichsflächen</div>
<div class="row" style="left:233.2px;top:363.2px;font-size:11.15px">+ Flächennummern</div>
<svg width="486" height="600" viewBox="0 0 486 600"><g transform="translate(-1421,-12)" fill="none" stroke-width="1.7" stroke-linejoin="miter"><rect x="1876.5" y="461.5" width="26" height="35" fill="#cde6f9" stroke="#a9d5f5" stroke-width="1"/><path d="M1877.8,368.8 L1889.5,374.2 L1901.3,368.8" stroke="#7f7f7f"/><path d="M1889.5,358.5 L1901.2,363.9 L1889.5,369.3 L1877.8,363.9 Z" stroke="#2f93dc" stroke-width="1.8"/><path d="M1889.5,364 V351 M1885.6,354.8 L1889.5,350.9 L1893.4,354.8" stroke="#2f93dc" stroke-width="1.6"/><path d="M1889.5,388 L1901.2,393.4 L1889.5,398.8 L1877.8,393.4 Z" stroke="#7f7f7f"/><path d="M1877.8,397.4 L1889.5,402.8 L1901.3,397.4 M1889.5,402.8 V410.6 M1885.6,407 L1889.5,410.9 L1893.4,407" stroke="#2f93dc" stroke-width="1.7"/><path d="M1889.5,424.7 L1901.2,430.1 L1889.5,435.5 L1877.8,430.1 Z" stroke="#7f7f7f"/><path d="M1877.8,434.2 L1889.5,439.6 L1901.3,434.2" stroke="#7f7f7f"/><path d="M1886.4,442.2 L1892.6,448.4 M1892.6,442.2 L1886.4,448.4" stroke="#2f93dc" stroke-width="1.9"/><path d="M1878.4,457.6 H1900.8" stroke="#8a8a8a" stroke-width="1"/><rect x="1882.6" y="472.6" width="14" height="14" rx="2.6" fill="#fff" stroke="#2f93dc" stroke-width="2"/><rect x="1886.6" y="476.8" width="6" height="5.8" rx=".6" stroke="#7f7f7f" stroke-width="1.5"/><path d="M1877.8,479.6 H1880.8 M1898.4,479.6 H1901.4 M1889.6,467.4 V470.6 M1889.6,488.6 V491.8" stroke="#7f7f7f" stroke-width="1.4"/></g></svg>
<svg width="486" height="40" viewBox="0 0 486 40"><g transform="translate(9.5,8.5)"><path d="M0,3.2 C2,0.2 9,-0.6 11.5,2.6 C9.5,2.2 8,3 6.6,4.4 L5.8,8.2 L4.9,4.6 C3.6,3.2 1.8,2.6 0,3.2 Z" fill="#2e8b74"/><path d="M5.8,1 L5.8,5" stroke="#1f5f7a" stroke-width=".8"/></g></svg>
<div class="btn" style="left:125px;top:562px;width:43px">OK</div>
<div class="btn" style="left:177px;top:562px;width:81px">Abbrechen</div>
<div class="btn" style="left:267px;top:562px;width:89px">Übernehmen</div>
</div>
<div class="abs" style="left:882px;top:536px;width:584px;height:172px;border:1px solid #000;background:#fff59f;overflow:hidden">
<div class="abs" style="left:0;top:0;width:584px;height:19.4px;background:#e0d88c"></div>
<div class="abs" style="left:0;top:39.7px;width:584px;height:20.1px;background:#e0d88c"></div>
<div class="tt" style="left:0px;top:3px;color:#524a46;font-size:11.25px;">Nummer</div>
<div class="tt" style="left:0px;top:23px;color:#524a46;font-size:11.25px;">Bezeichnung</div>
<div class="tt" style="left:0px;top:43px;color:#524a46;font-size:11.25px;">Status der U...</div>
<div class="tt" style="left:0px;top:109px;color:#524a46;font-size:11.25px;">Konflikte</div>
<div class="tt" style="left:90px;top:1px">E11</div>
<div class="tt" style="left:90px;top:21px;font-size:11.4px">Anlage von Kleingewässern /Umbau eines Weidengebüsches im Bereich Weidenheger</div>
<div class="tt" style="left:90px;top:41px">{kein Eintrag}</div>
<div class="tt" style="left:91px;top:60px">B 183, OU Bad Liebenwerda</div>
<div class="tt" style="left:257px;top:60px">K3/K4</div>
<div class="tt" style="left:318px;top:60px">K3/K4-3</div>
<div class="tt" style="left:399px;top:60px">Feuchtwiese (GFR) 0,39 ha(bau...</div>
<div class="tt" style="left:91px;top:76px">B 183, OU Bad Liebenwerda</div>
<div class="tt" style="left:257px;top:76px">K8</div>
<div class="tt" style="left:318px;top:76px">K8-1</div>
<div class="tt" style="left:399px;top:76px">Verlust und Beeinträchtigung vo...</div>
<div class="abs" style="left:89px;top:75px;width:500px;height:1px;background:#8e8e86"></div>
<div class="tt" style="left:91px;top:92px">B 183, OU Bad Liebenwerda</div>
<div class="tt" style="left:257px;top:92px">K11</div>
<div class="tt" style="left:318px;top:92px">K11-1</div>
<div class="tt" style="left:399px;top:92px">Beeinträchtigung von Brutstandorten</div>
<div class="abs" style="left:89px;top:91px;width:500px;height:1px;background:#8e8e86"></div>
<div class="tt" style="left:91px;top:108px">B 183, OU Bad Liebenwerda</div>
<div class="tt" style="left:257px;top:108px">K12</div>
<div class="tt" style="left:318px;top:108px">K12-1</div>
<div class="tt" style="left:399px;top:108px">Verlust von Brutstandorten und ...</div>
<div class="abs" style="left:89px;top:107px;width:500px;height:1px;background:#8e8e86"></div>
<div class="tt" style="left:91px;top:124px">B 183, OU Bad Liebenwerda</div>
<div class="tt" style="left:257px;top:124px">K14</div>
<div class="tt" style="left:318px;top:124px">K14-1</div>
<div class="tt" style="left:399px;top:124px">Verlust von Lebensraum und pote</div>
<div class="abs" style="left:89px;top:123px;width:500px;height:1px;background:#8e8e86"></div>
<div class="tt" style="left:91px;top:140px">B 183, OU Bad Liebenwerda</div>
<div class="tt" style="left:257px;top:140px">K14</div>
<div class="tt" style="left:318px;top:140px">K14-1</div>
<div class="tt" style="left:399px;top:140px">Verlust von Lebensraum und pote</div>
<div class="abs" style="left:89px;top:139px;width:500px;height:1px;background:#8e8e86"></div>
<div class="tt" style="left:91px;top:156px">B 183, OU Bad Liebenwerda</div>
<div class="tt" style="left:257px;top:156px">K17/K18</div>
<div class="tt" style="left:318px;top:156px">K17/K18-1</div>
<div class="tt" style="left:399px;top:156px">Dammwiese km 0,4-1,6 / anlag...</div>
<div class="abs" style="left:89px;top:155px;width:500px;height:1px;background:#8e8e86"></div>
<div class="abs" style="left:255px;top:60px;width:1px;height:113px;background:#8e8e86"></div>
<div class="abs" style="left:316px;top:60px;width:1px;height:113px;background:#8e8e86"></div>
<div class="abs" style="left:397px;top:60px;width:1px;height:113px;background:#8e8e86"></div>
</div>
<svg width="1918" height="1036" viewBox="0 0 1918 1036">
<rect x="19.3" y="741.3" width="9.6" height="9.6" rx="3.2" fill="none" stroke="#848484" stroke-width="1.8"/><rect x="22.1" y="744.1" width="4" height="4" fill="#2f93dc"/><rect x="31.5" y="753.7" width="9.6" height="9.6" rx="3.2" fill="none" stroke="#848484" stroke-width="1.8"/><rect x="34.3" y="756.5" width="4" height="4" fill="#2f93dc"/>
<rect x="56.5" y="741.3" width="9.6" height="9.6" rx="3.2" fill="none" stroke="#848484" stroke-width="1.8"/><rect x="59.3" y="744.1" width="4" height="4" fill="#2f93dc"/><rect x="68.8" y="753.7" width="9.6" height="9.6" rx="3.2" fill="none" stroke="#848484" stroke-width="1.8"/>
<path d="M70,744.6 H75.6 V750" fill="none" stroke="#848484" stroke-width="1.5"/>
<rect x="93.5" y="741.3" width="9.6" height="9.6" rx="3.2" fill="none" stroke="#848484" stroke-width="1.8"/><rect x="105.8" y="753.7" width="9.6" height="9.6" rx="3.2" fill="none" stroke="#848484" stroke-width="1.8"/>
<g fill="none" stroke="#848484" stroke-width="1.8"><ellipse cx="141.5" cy="744.6" rx="9.8" ry="3.4"/><path d="M131.8,745.2 L134.2,760.6 Q134.6,763.2 141.5,763.2 Q148.4,763.2 148.8,760.6 L151.2,745.2"/></g>
<path d="M137.9,751.8 L145.2,758.8 M145.2,751.8 L137.9,758.8" stroke="#2f93dc" stroke-width="1.9" fill="none"/>
<path d="M172.88,754.42 A8.2,8.2 0 1 1 181.51,760.47" fill="none" stroke="#848484" stroke-width="1.8"/><path d="M168.28,751.22 L172.68,755.02 L176.08,749.02" fill="none" stroke="#848484" stroke-width="1.8"/>
<path d="M199.5,741 V763.6" stroke="#848484" stroke-width="1.2"/>
<path d="M264.5,741 V763.6" stroke="#848484" stroke-width="1.2"/>
<path d="M297.3,741 V763.6" stroke="#848484" stroke-width="1.2"/>
<g fill="none" stroke="#848484" stroke-width="1.7" stroke-linejoin="round"><path d="M274.3,762 V741 L289.6,747.9 L274.3,753.8"/></g><circle cx="274.3" cy="762.6" r="1.9" fill="#848484"/>
<g fill="none" stroke="#848484" stroke-width="1.8" stroke-linecap="round"><path d="M302.8,755.6 Q308,748.2 314.4,748.2 Q321,748.2 326.4,756 Q321,762.6 314.4,762.6 Q308,762.6 302.8,755.6 Z"/><circle cx="314.4" cy="755.2" r="4.6"/><path d="M314.2,742.2 V744.4 M305.8,744.2 L307.6,746.2 M322.6,744.2 L320.8,746.2" stroke-width="1.5"/></g><circle cx="314.2" cy="755" r="2.1" fill="#2f93dc"/>
<path d="M340.3,1000 V1025" stroke="#b4b4b4" stroke-width="1.4" stroke-dasharray="1.4 1.9"/><path d="M840.3,1000 V1025" stroke="#b4b4b4" stroke-width="1.4" stroke-dasharray="1.4 1.9"/><path d="M937,1000 V1025" stroke="#b4b4b4" stroke-width="1.4" stroke-dasharray="1.4 1.9"/>
<path d="M393.4,1004.4 V1019.6" stroke="#848484" stroke-width="1.1"/>
<path d="M672.3,1004.4 V1019.6" stroke="#848484" stroke-width="1.1"/>
<path d="M729.6,1004.4 V1019.6" stroke="#848484" stroke-width="1.1"/>
<path d="M786.5,1004.4 V1019.6" stroke="#848484" stroke-width="1.1"/>
<rect x="354" y="1001.3" width="4.8" height="4.8" rx="1" fill="none" stroke="#848484" stroke-width="1.6"/>
<path d="M363.6,1003.7 H377.4" stroke="#848484" stroke-width="1.5"/>
<rect x="354" y="1010" width="4.8" height="4.8" rx="1" fill="none" stroke="#2f93dc" stroke-width="1.6"/>
<path d="M363.6,1012.4 H377.4" stroke="#848484" stroke-width="1.5"/>
<rect x="354" y="1018.7" width="4.8" height="4.8" rx="1" fill="none" stroke="#848484" stroke-width="1.6"/>
<path d="M363.6,1021.1 H377.4" stroke="#848484" stroke-width="1.5"/>
<rect x="411.8" y="1001.4" width="22.6" height="22.6" stroke="#2f93dc" stroke-width="1.7" stroke-dasharray="1.7 3.95" fill="none"/>
<circle cx="422.6" cy="1011.7" r="8.4" fill="#fff"/><circle cx="422.6" cy="1011.7" r="7.6" fill="none" stroke="#848484" stroke-width="1.8"/><path d="M417.128,1017.17 L410.928,1023.57" stroke="#848484" stroke-width="1.9"/>
<circle cx="461.4" cy="1010.4" r="7.6" fill="none" stroke="#848484" stroke-width="1.8"/><path d="M455.928,1015.87 L449.728,1022.27" stroke="#848484" stroke-width="1.9"/><path d="M456.6,1010.4 H466.2" stroke="#2f93dc" stroke-width="1.9"/>
<circle cx="496.2" cy="1012.2" r="7.6" fill="none" stroke="#848484" stroke-width="1.8"/><path d="M490.728,1017.67 L484.528,1024.07" stroke="#848484" stroke-width="1.9"/><path d="M485,1006 V1001.2 H490 M503,1001.2 H508 V1006 M508,1019 V1024 H503" fill="none" stroke="#2f93dc" stroke-width="1.8"/>
<circle cx="533.3" cy="1012.6" r="7.6" fill="none" stroke="#848484" stroke-width="1.8"/><path d="M527.828,1018.07 L521.628,1024.47" stroke="#848484" stroke-width="1.9"/><path d="M533.6,1012.4 L544.8,1001.4 M538.6,1001.2 H545.2 V1007.8" fill="none" stroke="#2f93dc" stroke-width="1.9"/>
<g fill="none" stroke="#848484" stroke-width="1.8">
<path d="M563.92,1010.04 A6.9,6.9 0 0 1 576.88,1010.04"/>
<path d="M576.88,1014.76 A6.9,6.9 0 0 1 563.92,1014.76"/>
<path d="M574.6,1011.6 L578.6,1013.6 L582,1009.4"/><path d="M566.2,1013.2 L562.2,1011.2 L558.8,1015.4"/>
</g>
<path d="M601.67,1014.42 A7.8,7.8 0 1 1 609.88,1020.17" fill="none" stroke="#848484" stroke-width="1.8"/><path d="M597.07,1011.22 L601.47,1015.02 L604.87,1009.02" fill="none" stroke="#848484" stroke-width="1.8"/>
<path d="M650.73,1014.42 A7.8,7.8 0 1 0 642.52,1020.17" fill="none" stroke="#a9a9a9" stroke-width="1.8"/><path d="M655.33,1011.22 L650.93,1015.02 L647.53,1009.02" fill="none" stroke="#a9a9a9" stroke-width="1.8"/>
<g fill="none" stroke="#848484" stroke-width="1.8" stroke-linejoin="round"><path d="M695.4,1006.4 V1001.8 H708.2 V1006.4"/><path d="M695.2,1019 H692.6 Q690.8,1019 690.8,1017.2 V1008.4 Q690.8,1006.6 692.6,1006.6 H710.8 Q712.6,1006.6 712.6,1008.4 V1017.2 Q712.6,1019 710.8,1019 H708.4"/><rect x="695.3" y="1013.4" width="13" height="10" rx="1" fill="#fff"/></g>
<path d="M697.6,1017.8 H705.6 M697.6,1020.2 H705.6" stroke="#2f93dc" stroke-width="1.5"/><circle cx="693.3" cy="1009.8" r=".8" fill="#848484"/>
<path d="M0,0 L16.4,6.6 L11.4,9.8 L16.8,14.6 L13.6,17 L8.4,12 L5.2,15.6 Z" transform="translate(753.4,1008.2) scale(0.931)" fill="#fff" stroke="#848484" stroke-width="1.8" stroke-linejoin="miter"/>
<path d="M747.6,1002 L749,1004 M753.6,1000.6 V1003 M746.2,1007.6 L748.6,1007.8" stroke="#848484" stroke-width="1.3"/>
<text x="745.4" y="1024" font-family="Liberation Serif, serif" font-weight="bold" font-size="19" fill="#2f93dc">i</text>
<g fill="none" stroke="#848484" stroke-width="1.8" stroke-linejoin="round"><path d="M806.6,1008.6 V1002.6 Q806.6,1001.4 807.8,1001.4 H812.6 Q813.6,1001.4 814.2,1002.4 L815.6,1004.6 H824.4 Q825.6,1004.6 825.6,1005.8 V1008.6"/><path d="M804.6,1008.8 H827 L825.6,1023.6 H806.2 Z"/></g>
<path d="M951,1001.6 H974.2 V1007.6 M951,1001.6 V1012.4 L955.8,1023.6" stroke="#2f93dc" stroke-width="1.7" stroke-dasharray="1.7 3.95" fill="none"/>
<path d="M0,0 L16.4,6.6 L11.4,9.8 L16.8,14.6 L13.6,17 L8.4,12 L5.2,15.6 Z" transform="translate(957.4,1007.8) scale(0.95)" fill="#fff" stroke="#848484" stroke-width="1.8" stroke-linejoin="miter"/>
<circle cx="999.6" cy="1012.4" r="11.4" stroke="#2f93dc" stroke-width="1.7" stroke-dasharray="1.7 3.42" fill="none"/>
<path d="M0,0 L16.4,6.6 L11.4,9.8 L16.8,14.6 L13.6,17 L8.4,12 L5.2,15.6 Z" transform="translate(995,1007.8) scale(0.95)" fill="#fff" stroke="#848484" stroke-width="1.8" stroke-linejoin="miter"/>
<path d="M1025.8,1023.6 V1001.6 H1047.8 V1007.8 M1025.8,1023.6 H1031 M1029.6,1018.4 H1031 M1042,1006.2 H1048" stroke="#2f93dc" stroke-width="1.7" stroke-dasharray="1.7 3.95" fill="none"/>
<path d="M0,0 L16.4,6.6 L11.4,9.8 L16.8,14.6 L13.6,17 L8.4,12 L5.2,15.6 Z" transform="translate(1030.6,1007.8) scale(0.95)" fill="#fff" stroke="#848484" stroke-width="1.8" stroke-linejoin="miter"/>
<rect x="1062.6" y="1001.6" width="22.6" height="22" stroke="#2f93dc" stroke-width="1.7" stroke-dasharray="1.7 3.95" fill="none"/>
<rect x="1067" y="1006" width="13" height="13" fill="#878787"/>
<path d="M0,0 L16.4,6.6 L11.4,9.8 L16.8,14.6 L13.6,17 L8.4,12 L5.2,15.6 Z" transform="translate(1070.6,1009.6) scale(0.855)" fill="#fff" stroke="#848484" stroke-width="1.8" stroke-linejoin="miter"/>
<path d="M0,0 L16.4,6.6 L11.4,9.8 L16.8,14.6 L13.6,17 L8.4,12 L5.2,15.6 Z" transform="translate(1101.4,1006.8) scale(0.95)" fill="#fff" stroke="#848484" stroke-width="1.8" stroke-linejoin="miter"/>
<path d="M1111.4,1005 L1113.8,1007.2 L1119.2,1001.2" fill="none" stroke="#2f93dc" stroke-width="1.9"/>
<rect x="859.5" y="1002.5" width="69" height="19" fill="#fff" stroke="#7a7a7a" stroke-width="1"/>
<path d="M915.2,1011.4 L919.2,1015.4 L923.2,1011.4" fill="none" stroke="#333" stroke-width="1.2"/>
<rect x="1129.5" y="999.5" width="126" height="26" fill="#e1e1e1" stroke="#adadad" stroke-width="1"/>
<path d="M1241.8,1011 L1245.6,1014.8 L1249.4,1011" fill="none" stroke="#333" stroke-width="1.2"/>
</svg>
<div class="t" style="left:849.5px;top:1005px;font-family:Liberation Sans,sans-serif;font-size:11.3px">1:</div>
<div class="t" style="left:862.6px;top:1005px;font-family:Liberation Sans,sans-serif;font-size:11.3px">1802</div>
<div class="t" style="left:1132.5px;top:1005px;font-size:11.2px">alles</div>
<svg width="1918" height="1036" viewBox="0 0 1918 1036">
<defs><clipPath id="mm"><rect x="19.5" y="773.5" width="301" height="247.5"/></clipPath><filter id="bl" x="-5%" y="-5%" width="110%" height="110%"><feGaussianBlur stdDeviation="1.2"/></filter></defs>
<rect x="19" y="773" width="302" height="248.5" fill="#fbfbf8" stroke="#cfe6f7" stroke-width="1"/>
<g clip-path="url(#mm)"><g transform="translate(15,770) scale(0.24624)">
<g filter="url(#bl)">
<g fill="#edf4e3"><path d="M20,20 H480 L470,120 L330,200 L200,170 L20,190 Z"/><path d="M620,20 H1240 V160 L1100,130 L900,100 L800,180 L700,200 L640,150 Z"/><path d="M860,440 L1240,430 V520 L1080,540 L1080,480 L850,500 Z"/><path d="M260,870 L380,900 L420,1020 L250,1020 Z"/><path d="M20,420 L300,420 L200,520 L60,560 L20,640 Z"/></g>
<g fill="#fdfdfb"><path d="M560,830 L820,820 L840,900 L700,1020 L560,1020 Z"/></g>
<g fill="none" stroke="#f7dfb4" stroke-width="9" stroke-linecap="round"><path d="M20,178 L160,190 L240,260 L350,290"/><path d="M478,20 L505,110 L560,175 L605,210"/><path d="M850,430 L900,520 L930,560"/><path d="M1240,650 L1150,670 L1080,740 L1090,800 L1040,860 L1000,960 L960,1020"/></g>
<g fill="none" stroke="#e6e6e6" stroke-width="7"><path d="M60,20 L130,140 L230,240 L300,420"/><path d="M20,330 L180,330 L330,300"/><path d="M700,20 L720,120 L640,200"/><path d="M1240,60 L1100,90 L1000,170 L900,200"/><path d="M20,560 L120,640 L250,640 L420,560"/><path d="M20,880 L200,900 L260,1020"/><path d="M700,700 L800,760 L900,900 L1100,980 L1240,960"/><path d="M1240,330 L1120,380 L1080,520"/><path d="M130,140 L140,420 L250,1020" stroke-dasharray="18 10" stroke="#e2e2e2"/></g>
</g>
<polygon points="350,235 385,230 390,265 420,262 445,285 480,295 500,285 530,270 545,240 590,225 625,210 660,215 700,230 730,240 800,200 825,165 885,120 905,140 960,150 990,185 1075,150 1130,185 1165,185 1210,170 1215,270 1075,290 1075,365 1025,405 850,425 780,545 745,590 750,660 680,650 660,610 640,650 650,745 560,790 535,820 545,900 490,880 440,860 375,880 345,840 255,835 245,770 215,790 85,800 70,765 45,700 70,660 60,620 90,560 135,548 185,545 215,510 285,470 325,410 350,370 340,330 385,290" fill="#f7f3e6"/>
<g fill="#cfe6b6"><path d="M800,200 L825,165 L885,120 L905,140 L960,150 L990,185 L1075,150 L1130,185 L1165,185 L1210,170 L1215,270 L1075,290 L1075,365 L1025,405 L850,425 L790,400 L740,340 L860,300 L885,250 L830,210 Z"/><path d="M185,545 L215,510 L285,470 L335,480 L310,560 L318,615 L270,640 L250,580 L170,585 Z"/><path d="M545,240 L590,225 L625,210 L620,270 L560,275 Z"/><path d="M250,720 L285,700 L290,745 L245,770 Z"/><path d="M620,580 L680,560 L690,600 L660,610 L640,650 L600,640 Z"/><path d="M330,780 L380,770 L385,830 L345,838 Z"/><path d="M590,700 L640,670 L648,740 L610,760 Z"/></g>
<g fill="#f7f3e6"><path d="M1040,200 L1160,195 L1150,260 L1050,270 Z"/><path d="M830,170 L930,160 L930,200 L850,215 Z"/></g>
<g fill="none" stroke="#fff" stroke-width="13" filter="url(#bl)"><path d="M90,700 L250,640 L330,590 L420,440 L520,420"/><path d="M400,270 L400,330 L440,380"/><path d="M590,420 L580,600 L585,700 L540,800"/><path d="M650,240 L650,300 L700,300"/><path d="M680,480 L720,560 L720,640"/><path d="M740,300 L860,250 L930,180"/></g>
<g fill="none" stroke="#cfcfcf" stroke-width="3.5" filter="url(#bl)"><path d="M90,700 L250,640 L330,590 L420,440 L520,420"/><path d="M590,420 L580,600 L585,700 L540,800"/><path d="M680,480 L720,560 L720,640"/><path d="M215,610 L225,700 L215,790"/></g>
<g filter="url(#bl)"><path d="M600,290 L700,280 L720,360 L700,400 L640,410 L600,360 Z" fill="#dcdcdc"/><path d="M735,270 L765,265 L765,300 L740,300 Z M760,430 L800,430 L790,465 L760,460 Z M680,310 L700,310 L700,335 L680,335 Z" fill="#bcd0ea"/></g>
<g fill="none" stroke="#f4a534" stroke-width="9" stroke-linejoin="round" filter="url(#bl)"><path d="M352,292 L400,330 L440,375 L500,400 L530,405"/><path d="M610,212 L615,270 L660,285 L700,290 L715,340 L740,385 L800,410 L845,425"/><path d="M560,370 L600,365 L640,380 L700,378"/></g>
<g fill="none" stroke="#4c4c4c" stroke-width="11.5" stroke-linejoin="round" filter="url(#bl)" opacity=".92">
<polygon points="350,235 385,230 390,265 420,262 445,285 480,295 500,285 530,270 545,240 590,225 625,210 660,215 700,230 730,240 800,200 825,165 885,120 905,140 960,150 990,185 1075,150 1130,185 1165,185 1210,170 1215,270 1075,290 1075,365 1025,405 850,425 780,545 745,590 750,660 680,650 660,610 640,650 650,745 560,790 535,820 545,900 490,880 440,860 375,880 345,840 255,835 245,770 215,790 85,800 70,765 45,700 70,660 60,620 90,560 135,548 185,545 215,510 285,470 325,410 350,370 340,330 385,290"/>
<polyline points="135,548 150,585 250,580 270,640 245,770" stroke-width="9.5"/>
<polyline points="270,640 360,660 430,655 500,700 650,745" stroke-width="9.5"/>
<polyline points="500,700 400,790 310,830" stroke-width="9.5"/>
<polyline points="430,655 470,620 470,575 495,545 465,450 440,440 285,470" stroke-width="9.5"/>
<polyline points="465,450 520,440" stroke-width="9.5"/>
<polyline points="495,545 560,555 620,540 650,500 640,440" stroke-width="9.5"/>
<polyline points="560,555 580,600" stroke-width="9.5"/>
<polyline points="620,540 720,520 780,545" stroke-width="9.5"/>
<polyline points="610,575 660,610" stroke-width="9.5"/>
<polyline points="650,500 720,520" stroke-width="9.5"/>
<polyline points="530,270 520,330 480,360 500,400 560,355 620,350 640,440" stroke-width="9.5"/>
<polyline points="545,240 560,275 620,270 700,230" stroke-width="9.5"/>
<polyline points="730,240 740,300 720,340" stroke-width="9.5"/>
<polyline points="740,330 860,300 885,250 830,210 800,200" stroke-width="9.5"/>
<polyline points="870,290 880,340 1075,290" stroke-width="9.5"/>
<polyline points="720,340 740,385 850,425" stroke-width="9.5"/>
<polyline points="590,225 595,290 560,300" stroke-width="9.5"/>
<polyline points="440,285 470,330 520,330" stroke-width="9.5"/>
</g>
</g>
<g font-family="DejaVu Sans, sans-serif" font-size="9.4" fill="#111" text-anchor="middle" letter-spacing=".5">
<text x="254" y="831.5">Theisa</text>
<text x="160.8" y="856">Bad</text>
<text x="161" y="866.6">Lieben-</text>
<text x="163" y="876">werda</text>
<text x="222.4" y="867.2">Dobra</text>
<text x="107.4" y="907.3">Möglenz</text>
<text x="54" y="945">Burxdorf</text>
<text x="132.6" y="973.5">Kröbeln</text>
</g>
<path d="M144.8,773.5 V1021 M19.5,873.4 H320.5" stroke="#29abe2" stroke-width="2.2"/>
<rect x="140.4" y="870" width="8.6" height="8.6" fill="#f7941d" stroke="#6a6a6a" stroke-width="1"/>
<path d="M219.6,899.6 H278.8 V938 Q278.8,951 268,958.6 Q258,965.4 249.2,965.8 Q240.4,965.4 230.4,958.6 Q219.6,951 219.6,938 Z" fill="#fff" stroke="#111" stroke-width=".9"/>
<g fill="#1c63b7" stroke="#0d3f80" stroke-width=".6"><path d="M249.2,907 L261.6,919.4 H236.8 Z"/><path d="M234.2,918.8 H264.2 V926.6 H234.2 Z"/><path d="M238,926.4 H260.4 V956.6 H238 Z"/><path d="M238,955.6 H260.4 L264.4,961 L258,964.6 H240.4 L234,961 Z"/></g>
<path d="M236.5,922.4 h3 v-2 h3.2 v2 h3.2 v-2 h3.2 v2 h3.2 v-2 h3.2 v2 h3" fill="none" stroke="#0b2f60" stroke-width=".9"/>
<circle cx="249.2" cy="905.6" r="2.6" fill="#111"/>
<path d="M240.6,931.4 H257.8 V943 Q257.8,949.4 249.2,951.6 Q240.6,949.4 240.6,943 Z" fill="#fff" stroke="#0b2f60" stroke-width=".5"/>
<path d="M245,936 c-1.2,-2.2 -4,-1.4 -3.6,0.8 c0.3,1.6 2.2,2.6 3.6,3.8 c1.4,-1.2 3.3,-2.2 3.6,-3.8 c0.4,-2.2 -2.4,-3 -3.6,-0.8z" fill="#e8202a"/><path d="M253.4,936 c-1.2,-2.2 -4,-1.4 -3.6,0.8 c0.3,1.6 2.2,2.6 3.6,3.8 c1.4,-1.2 3.3,-2.2 3.6,-3.8 c0.4,-2.2 -2.4,-3 -3.6,-0.8z" fill="#e8202a"/><path d="M249.2,943.6 c-1.2,-2.2 -4,-1.4 -3.6,0.8 c0.3,1.6 2.2,2.6 3.6,3.8 c1.4,-1.2 3.3,-2.2 3.6,-3.8 c0.4,-2.2 -2.4,-3 -3.6,-0.8z" fill="#e8202a"/>
</g>
<g font-family="DejaVu Sans, sans-serif" fill="#0a0a0a" text-anchor="middle" stroke="#0a0a0a" stroke-width=".25"><text x="250.4" y="985.6" font-size="16.6">Bad</text><text x="250.6" y="1006.6" font-size="17.4" letter-spacing=".15">Liebenwerda</text></g>
</svg>
</body></html>
